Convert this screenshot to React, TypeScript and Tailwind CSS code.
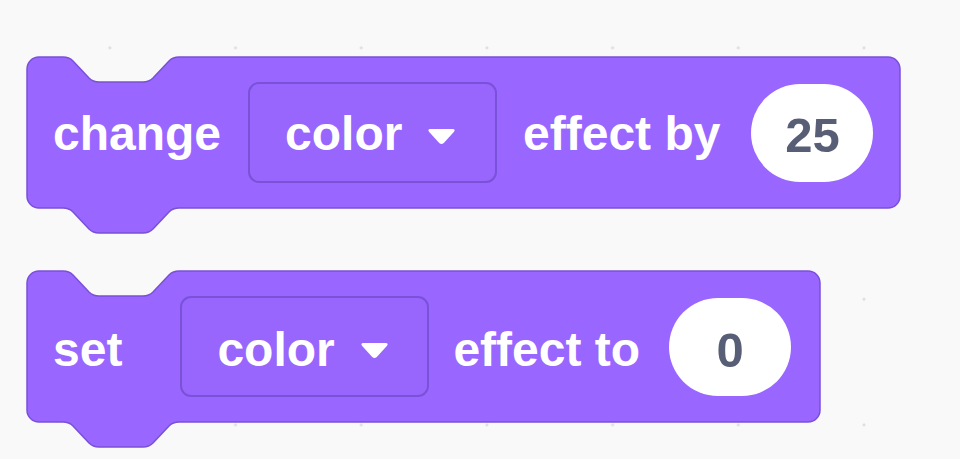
import React from 'react'

const FONT = "font-['Liberation_Sans',Arial,sans-serif]"

// scratch style stack block outline with top notch and bottom tab
const blockPath = (w: number, h: number) =>
  `M 0 12 A 12 12 0 0 1 12 0 H 36 Q 42 0 46 4 L 62 21 Q 66 25 72 25 H 116 Q 122 25 126 21 L 142 4 Q 146 0 152 0 ` +
  `H ${w - 12} A 12 12 0 0 1 ${w} 12 V ${h - 12} A 12 12 0 0 1 ${w - 12} ${h} ` +
  `H 152 Q 146 ${h} 142 ${h + 4} L 126 ${h + 21} Q 122 ${h + 25} 116 ${h + 25} H 72 Q 66 ${h + 25} 62 ${h + 21} L 46 ${h + 4} Q 42 ${h} 36 ${h} ` +
  `H 12 A 12 12 0 0 1 0 ${h - 12} Z`

const Arrow = () => (
  <svg width="29" height="17" viewBox="0 0 29 17" className="mt-[8px] shrink-0">
    <path d="M 3.5 1 H 25.5 Q 29 1 26.8 4 L 16.8 15 Q 14.5 17.2 12.2 15 L 2.2 4 Q 0 1 3.5 1 Z" fill="#fff" />
  </svg>
)

const Dropdown = ({ label, pad }: { label: string; pad: string }) => (
  <div className="flex items-center w-[249px] h-[101px] shrink-0 rounded-[11px] border-2 border-[#7a52d8] bg-[#9865fd] pl-[35px]">
    <span className={`text-white font-bold text-[48px] leading-[48px] ${pad}`}>{label}</span>
    <span className="ml-[25px]">
      <Arrow />
    </span>
  </div>
)

const Oval = ({ value, pad }: { value: string; pad: string }) => (
  <div className="flex items-center justify-center w-[122px] h-[98px] shrink-0 rounded-full bg-white">
    <span className={`text-[#575e75] font-bold text-[49px] leading-[48px] ${pad}`}>{value}</span>
  </div>
)

const Block = ({ w, children }: { w: number; children: React.ReactNode }) => (
  <div className="relative h-[151px]" style={{ width: w }}>
    <svg className="absolute inset-0 overflow-visible" width={w} height={151}>
      <path d={blockPath(w, 151)} fill="#9966ff" stroke="#7950d6" strokeWidth="1.5" />
    </svg>
    <div className="relative flex items-center h-full pl-[26px]">{children}</div>
  </div>
)

export default function App() {
  return (
    <div
      className={`${FONT} w-[960px] h-[459px] overflow-hidden bg-[#f9f9f9] bg-[radial-gradient(circle,#dedede_1.2px,transparent_1.8px)] bg-[length:125.7px_125.7px] bg-[position:47px_-15px] flex flex-col gap-[63px] pt-[57px] pl-[27px]`}
    >
      <Block w={873}>
        <span className="text-white font-bold text-[48px] leading-[48px] pt-[2px]">change</span>
        <div className="ml-[27px]">
          <Dropdown label="color" pad="pt-[2px]" />
        </div>
        <span className="ml-[26px] text-white font-bold text-[48px] leading-[48px] pt-[2px]">effect by</span>
        <div className="ml-[31px]">
          <Oval value="25" pad="pt-[4px]" />
        </div>
      </Block>
      <Block w={793}>
        <span className="text-white font-bold text-[48px] leading-[48px] pt-[6px]">set</span>
        <div className="ml-[58px]">
          <Dropdown label="color" pad="pt-[6px]" />
        </div>
        <span className="ml-[24px] text-white font-bold text-[48px] leading-[48px] pt-[6px]">effect to</span>
        <div className="ml-[29px]">
          <Oval value="0" pad="pt-[6px]" />
        </div>
      </Block>
    </div>
  )
}
